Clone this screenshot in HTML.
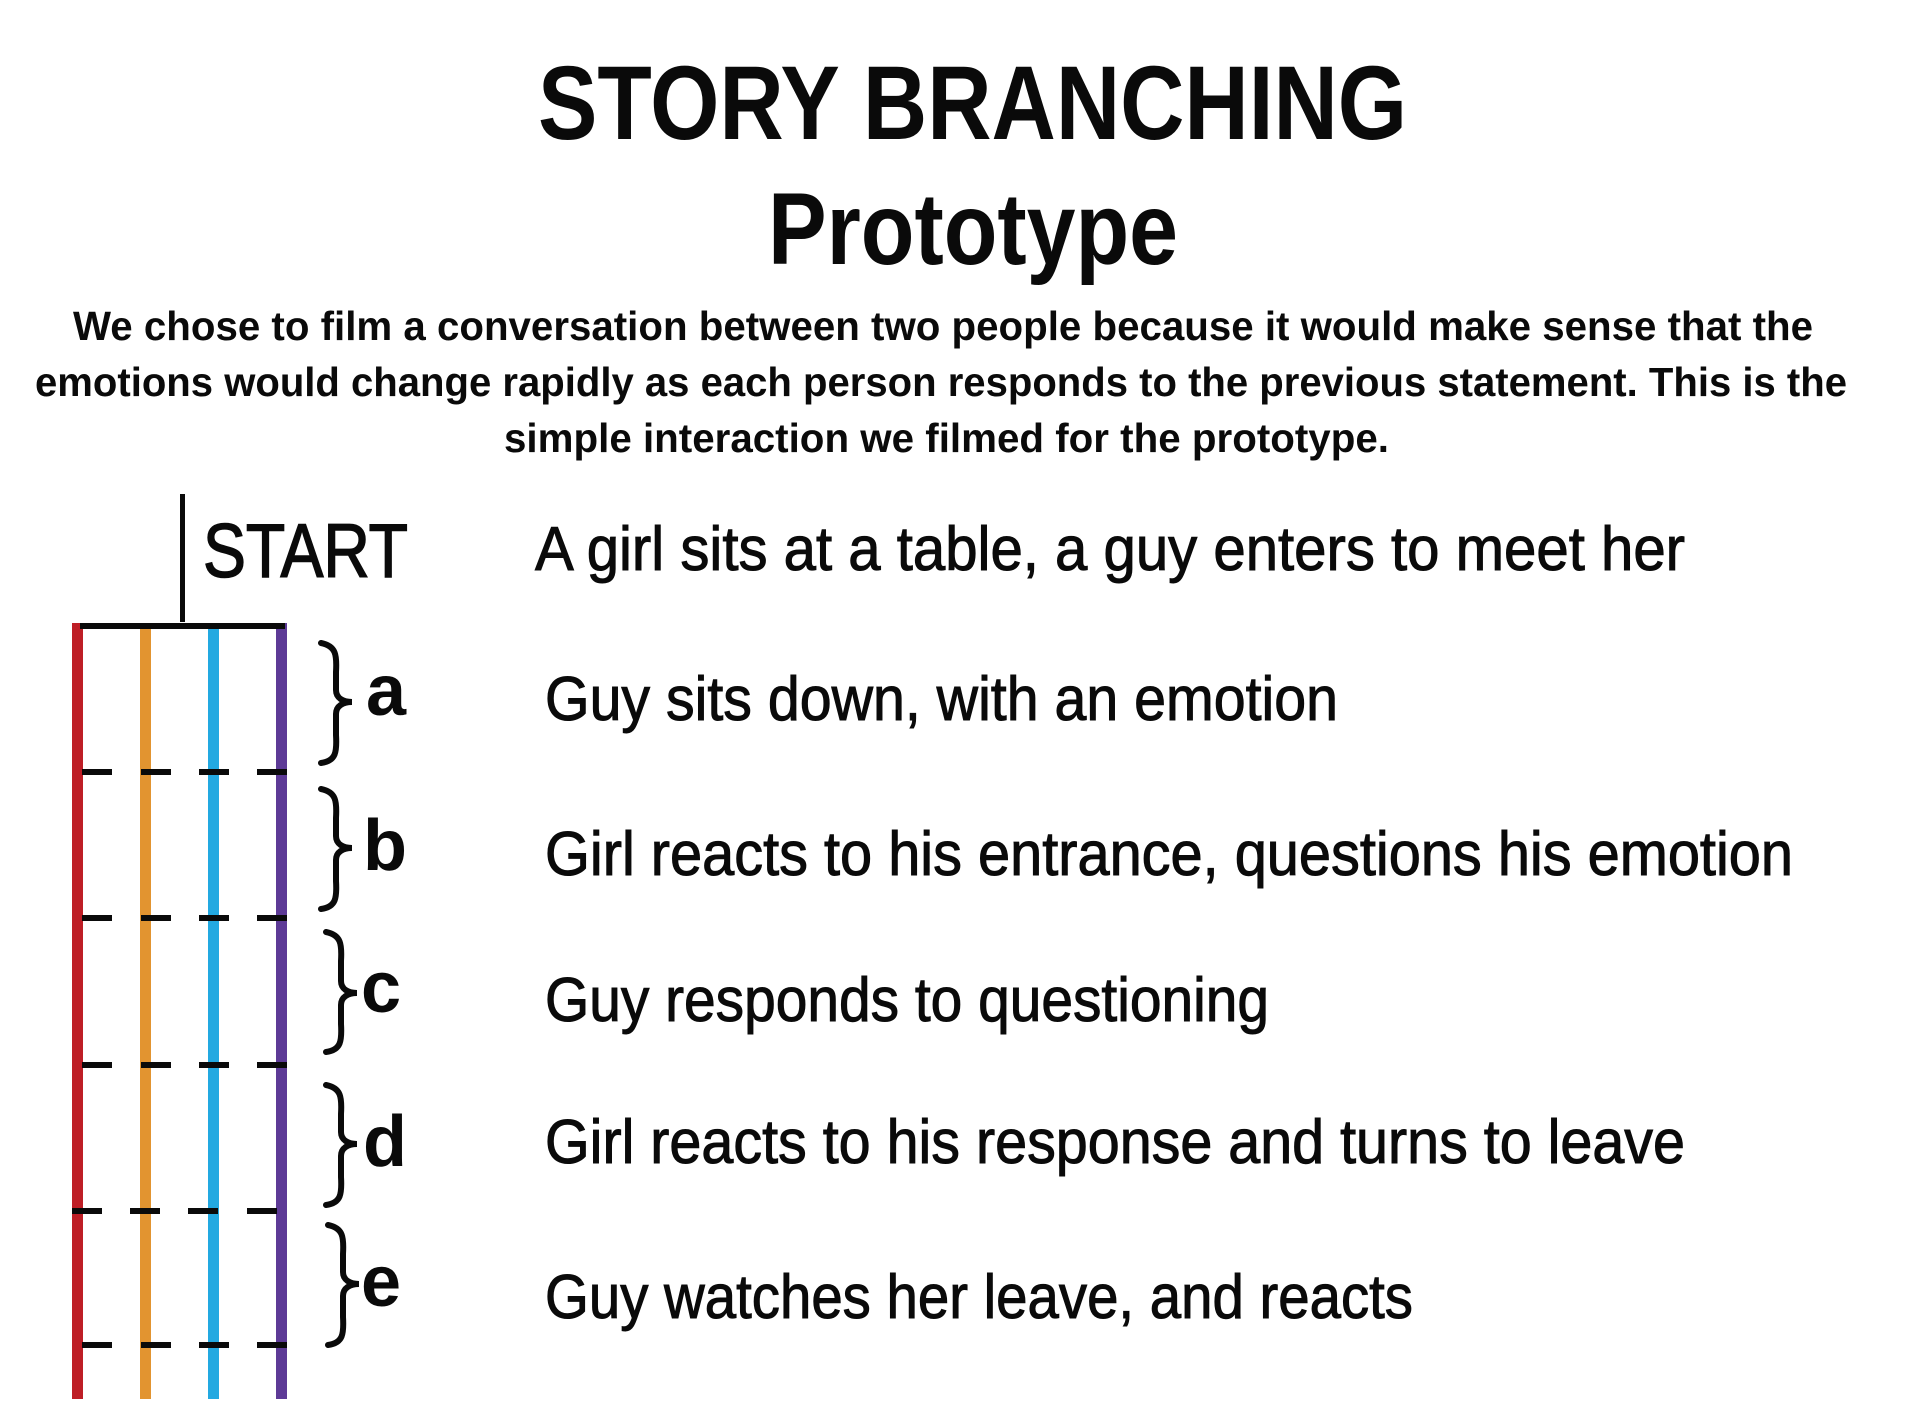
<!DOCTYPE html>
<html><head><meta charset="utf-8"><style>html,body{margin:0;padding:0;background:#fff}svg{display:block}</style></head>
<body>
<svg width="1920" height="1423" viewBox="0 0 1920 1423" xmlns="http://www.w3.org/2000/svg" font-family="'Liberation Sans', sans-serif" fill="#0a0a0a">
<rect width="1920" height="1423" fill="#fff"/>
<text x="538" y="139" font-size="105" font-weight="bold" textLength="869" lengthAdjust="spacingAndGlyphs">STORY BRANCHING</text>
<text x="768" y="264" font-size="102" font-weight="bold" textLength="410" lengthAdjust="spacingAndGlyphs">Prototype</text>
<g font-size="41" font-weight="bold">
<text x="73" y="340" textLength="1740" lengthAdjust="spacingAndGlyphs">We chose to film a conversation between two people because it would make sense that the</text>
<text x="35" y="396" textLength="1812" lengthAdjust="spacingAndGlyphs">emotions would change rapidly as each person responds to the previous statement. This is the</text>
<text x="504" y="452" textLength="885" lengthAdjust="spacingAndGlyphs">simple interaction we filmed for the prototype.</text>
</g>
<text x="203" y="577" font-size="76" textLength="205" lengthAdjust="spacingAndGlyphs" stroke="#0a0a0a" stroke-width="1.5">START</text>
<g font-size="62" stroke="#0a0a0a" stroke-width="1">
<text x="535" y="570" textLength="1150" lengthAdjust="spacingAndGlyphs">A girl sits at a table, a guy enters to meet her</text>
<text x="545" y="720" textLength="793" lengthAdjust="spacingAndGlyphs">Guy sits down, with an emotion</text>
<text x="545" y="875" textLength="1248" lengthAdjust="spacingAndGlyphs">Girl reacts to his entrance, questions his emotion</text>
<text x="545" y="1021" textLength="724" lengthAdjust="spacingAndGlyphs">Guy responds to questioning</text>
<text x="545" y="1163" textLength="1140" lengthAdjust="spacingAndGlyphs">Girl reacts to his response and turns to leave</text>
<text x="545" y="1318" textLength="868" lengthAdjust="spacingAndGlyphs">Guy watches her leave, and reacts</text>
</g>
<g font-size="72" font-weight="bold">
<text x="366" y="715">a</text>
<text x="363" y="870">b</text>
<text x="361" y="1012">c</text>
<text x="363" y="1166">d</text>
<text x="361" y="1306">e</text>
</g>
<rect x="72" y="623" width="11" height="776" fill="#be1e26"/>
<rect x="140" y="623" width="11" height="776" fill="#e29430"/>
<rect x="208" y="623" width="11" height="776" fill="#23a9e1"/>
<rect x="276" y="623" width="11" height="776" fill="#5d3a96"/>
<rect x="180" y="494" width="5" height="128" fill="#0a0a0a"/>
<rect x="80" y="623" width="205" height="6" fill="#0a0a0a"/>
<g fill="#0a0a0a">
<rect x="82" y="769" width="30" height="6"/><rect x="141" y="769" width="30" height="6"/><rect x="199" y="769" width="30" height="6"/><rect x="257" y="769" width="30" height="6"/>
<rect x="82" y="915" width="30" height="6"/><rect x="141" y="915" width="30" height="6"/><rect x="199" y="915" width="30" height="6"/><rect x="257" y="915" width="30" height="6"/>
<rect x="82" y="1062" width="30" height="6"/><rect x="141" y="1062" width="30" height="6"/><rect x="199" y="1062" width="30" height="6"/><rect x="257" y="1062" width="30" height="6"/>
<rect x="72" y="1208" width="30" height="6"/><rect x="130" y="1208" width="30" height="6"/><rect x="188" y="1208" width="30" height="6"/><rect x="247" y="1208" width="30" height="6"/>
<rect x="82" y="1342" width="30" height="6"/><rect x="141" y="1342" width="30" height="6"/><rect x="199" y="1342" width="30" height="6"/><rect x="257" y="1342" width="30" height="6"/>
</g>
<g fill="none" stroke="#0a0a0a" stroke-width="6" stroke-linecap="round">
<path d="M321 643 C336 646 337 655 336 672 L336 690 C336 698 343 702 352 702 C343 702 336 706 336 714 L336 735 C337 752 336 761 321 763"/>
<path d="M321 789 C336 792 337 801 336 818 L336 836 C336 844 343 848 352 848 C343 848 336 852 336 860 L336 881 C337 898 336 907 321 909"/>
<path d="M326 932 C341 935 342 944 341 961 L341 981 C341 989 348 993 357 993 C348 993 341 997 341 1005 L341 1024 C342 1041 341 1050 326 1052"/>
<path d="M326 1085 C341 1088 342 1097 341 1114 L341 1132 C341 1140 348 1144 357 1144 C348 1144 341 1148 341 1156 L341 1177 C342 1194 341 1203 326 1205"/>
<path d="M328 1225 C343 1228 344 1237 343 1254 L343 1272 C343 1280 350 1284 359 1284 C350 1284 343 1288 343 1296 L343 1317 C344 1334 343 1343 328 1345"/>
</g>
</svg>
</body></html>
